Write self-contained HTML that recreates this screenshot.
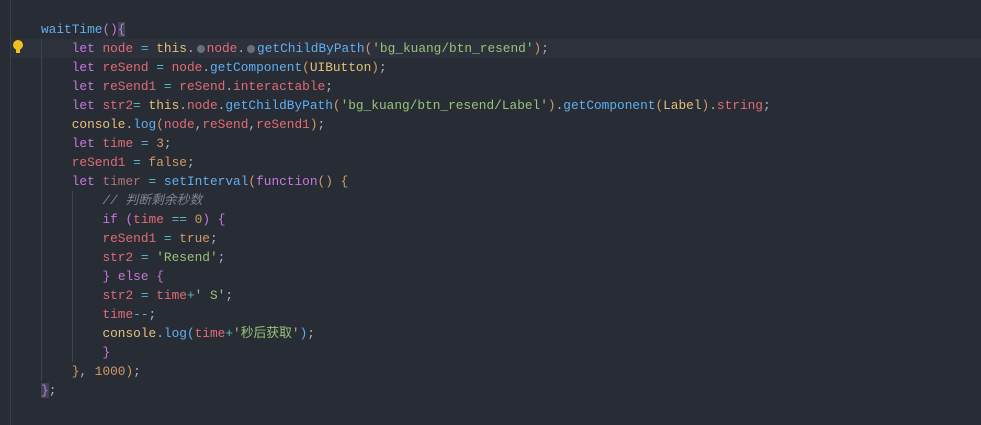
<!DOCTYPE html>
<html><head><meta charset="utf-8"><style>
body{margin:0;width:981px;height:425px;background:#282c34;overflow:hidden;position:relative;font-family:"Liberation Mono","Noto Sans CJK SC",monospace;font-size:12.8px;color:#abb2bf}
.gut{position:absolute;left:10px;top:0;width:1px;height:425px;background:#3b4048}
.cur{position:absolute;left:11px;top:39px;width:970px;height:19px;background:#2c313c}
.ig{position:absolute;width:1px;background:#3e4451}
.l{position:absolute;left:41px;height:19px;line-height:19px;white-space:pre}
.k{color:#c678dd}.v{color:#e06c75}.t{color:#e5c07b}.f{color:#61afef}.s{color:#98c379}.n{color:#d19a66}.o{color:#56b6c2}.c{color:#7f848e;font-style:italic}.b{color:#d19a66}
.dot{display:inline-block;width:8px;height:8px;border-radius:50%;background:#6b6f76;margin:0 2px;vertical-align:-1px}
.bulb{position:absolute;left:13px;top:40px;width:10px;height:10px;border-radius:50%;background:#f2c01c}
.bulb:after{content:"";position:absolute;left:3px;top:9px;width:4px;height:4px;background:#f2c01c}
</style></head><body>
<div class="gut"></div><div class="cur"></div><div class="bulb"></div>
<div class="ig" style="left:41px;top:39px;height:342px"></div>
<div class="ig" style="left:72px;top:191px;height:171px"></div>
<div class="l" style="top:20px"><span class="f">waitTime</span><span class="k">()</span><span class="k" style="background:#3e4451">{</span></div>
<div class="l" style="top:39px">    <span class="k">let</span> <span class="v">node</span> <span class="o">=</span> <span class="t">this</span>.<span class="dot"></span><span class="v">node</span>.<span class="dot"></span><span class="f">getChildByPath</span><span class="b">(</span><span class="s">'bg_kuang/btn_resend'</span><span class="b">)</span>;</div>
<div class="l" style="top:58px">    <span class="k">let</span> <span class="v">reSend</span> <span class="o">=</span> <span class="v">node</span>.<span class="f">getComponent</span><span class="b">(</span><span class="t">UIButton</span><span class="b">)</span>;</div>
<div class="l" style="top:77px">    <span class="k">let</span> <span class="v">reSend1</span> <span class="o">=</span> <span class="v">reSend</span>.<span class="v">interactable</span>;</div>
<div class="l" style="top:96px">    <span class="k">let</span> <span class="v">str2</span><span class="o">=</span> <span class="t">this</span>.<span class="v">node</span>.<span class="f">getChildByPath</span><span class="b">(</span><span class="s">'bg_kuang/btn_resend/Label'</span><span class="b">)</span>.<span class="f">getComponent</span><span class="b">(</span><span class="t">Label</span><span class="b">)</span>.<span class="v">string</span>;</div>
<div class="l" style="top:115px">    <span class="t">console</span>.<span class="f">log</span><span class="b">(</span><span class="v">node</span>,<span class="v">reSend</span>,<span class="v">reSend1</span><span class="b">)</span>;</div>
<div class="l" style="top:134px">    <span class="k">let</span> <span class="v">time</span> <span class="o">=</span> <span class="n">3</span>;</div>
<div class="l" style="top:153px">    <span class="v">reSend1</span> <span class="o">=</span> <span class="n">false</span>;</div>
<div class="l" style="top:172px">    <span class="k">let</span> <span class="v" style="color:#b0727a">timer</span> <span class="o">=</span> <span class="f">setInterval</span><span class="b">(</span><span class="k">function</span><span class="b">()</span> <span class="b">{</span></div>
<div class="l" style="top:191px">        <span class="c">// 判断剩余秒数</span></div>
<div class="l" style="top:210px">        <span class="k">if</span> <span class="k">(</span><span class="v">time</span> <span class="o">==</span> <span class="n">0</span><span class="k">)</span> <span class="k">{</span></div>
<div class="l" style="top:229px">        <span class="v">reSend1</span> <span class="o">=</span> <span class="n">true</span>;</div>
<div class="l" style="top:248px">        <span class="v">str2</span> <span class="o">=</span> <span class="s">'Resend'</span>;</div>
<div class="l" style="top:267px">        <span class="k">}</span> <span class="k">else</span> <span class="k">{</span></div>
<div class="l" style="top:286px">        <span class="v">str2</span> <span class="o">=</span> <span class="v">time</span><span class="o">+</span><span class="s">' S'</span>;</div>
<div class="l" style="top:305px">        <span class="v">time</span><span class="o">--</span>;</div>
<div class="l" style="top:324px">        <span class="t">console</span>.<span class="f">log</span><span class="f">(</span><span class="v">time</span><span class="o">+</span><span class="s">'秒后获取'</span><span class="f">)</span>;</div>
<div class="l" style="top:343px">        <span class="k">}</span></div>
<div class="l" style="top:362px">    <span class="b">}</span>, <span class="n">1000</span><span class="b">)</span>;</div>
<div class="l" style="top:381px"><span class="k" style="background:#3e4451">}</span>;</div>
</body></html>
